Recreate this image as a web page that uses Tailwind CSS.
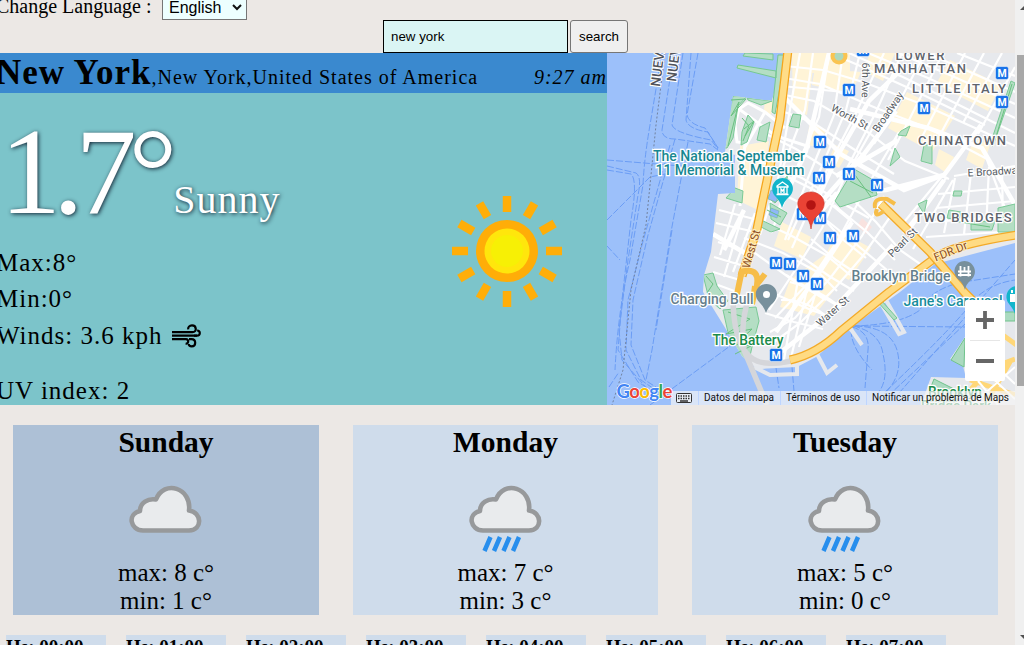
<!DOCTYPE html>
<html lang="en">
<head>
<meta charset="utf-8">
<title>Weather</title>
<script src="https://cdn.jsdelivr.net/npm/@tailwindcss/browser@4"></script>
</head>
<body class="h-[645px] w-[1024px] overflow-hidden bg-[#ece8e5] font-['Liberation_Serif',serif] text-black">
<div class="flex h-[645px] w-[1024px] overflow-hidden">
<main class="h-full w-[1015px] shrink-0 overflow-hidden">
  <div class="-mt-1 flex h-6 items-start">
    <label class="-ml-1 mt-[-2px] w-[166px] whitespace-nowrap text-xl leading-6">Change Language :</label>
    <div class="-mt-px flex h-[25px] w-[85px] items-center justify-between border border-[#767676] bg-[#edffff] pl-[6px] pr-1 font-['Liberation_Sans',sans-serif] text-base"><span>English</span>
      <svg class="h-[7px] w-[10px]" viewBox="0 0 10 7" fill="none" stroke="#111" stroke-width="2"><path d="M1 1l4 4 4-4"/></svg>
    </div>
  </div>
  <div class="flex h-[33px] gap-[2px] pl-[383px] font-['Liberation_Sans',sans-serif] text-[13.33px]">
    <div class="flex w-[185px] items-center border border-black bg-[#daf5f4] pl-[7px]">new york</div>
    <div class="flex w-[58px] items-center justify-center rounded-[3px] border border-[#767676] bg-[#efefef]">search</div>
  </div>

  <section class="flex h-[352px]">
    <div class="w-[607px] overflow-hidden bg-[#7cc4ca]">
      <header class="flex h-10 items-baseline justify-between whitespace-nowrap bg-[#3a89cf]">
        <div class="-ml-1 text-xl tracking-[1px]"><b class="text-[35px] leading-10 tracking-[1px]">New York</b>,New York,United States of America</div>
        <i class="pt-[2px] text-xl tracking-[1px]">9:27 am</i>
      </header>
      <div class="flex h-[312px]">
        <div class="w-[449px] whitespace-nowrap text-[25px] tracking-[1px]">
          <div class="h-[151px] text-white [text-shadow:1px_1px_4px_#123]"><span class="text-[122px] leading-[157px] tracking-[-8px]">1.7°</span><span class="ml-[4px] text-[40px] tracking-[1px]">Sunny</span></div>
          <p class="-ml-1 h-[37px] leading-[37px]">Max:8°</p>
          <p class="-ml-1 h-[36px] leading-[36px]">Min:0°</p>
          <p class="-ml-1 flex h-[37px] items-center leading-[37px]">Winds: 3.6 kph
            <svg class="ml-[10px] h-6 w-[29px]" viewBox="0 0 29 24" fill="none" stroke="#000" stroke-width="2.2"><path d="M0 8.2h20.5c4.7 0 4.2-6.8-.5-6.8-2.7 0-4.2 1.9-3.8 4M0 11.7h25c3.8 0 3.6-5.2.1-5.2M0 15.2h14c3.3 0 2.7 5-.4 4.3M17 15.2h2.5c5 0 4.8 7.2.2 7.2-2 0-3.1-1.2-2.9-2.5"/><path d="M22 11.7h3"/></svg>
          </p>
          <p class="-ml-1 mt-[19px] h-9 leading-9">UV index: 2</p>
        </div>
        <svg class="mt-[101px] h-[116px] w-[116px]" viewBox="449 195 116 116">
          <g fill="none" stroke="#ffae09" stroke-width="8.5"><path d="M507 197v16M507 292v16M452 252h16M546 252h16M479.500 204.400l8 13.800M526.500 285.800l8 13.800M534.500 204.400l-8 13.800M487.500 285.800l-8 13.800M459.400 224.500l13.800 8M540.800 271.500l13.800 8M554.600 224.500l-13.800 8M473.200 271.500l-13.800 8"/></g>
          <circle cx="507" cy="252" r="31" fill="#ffad08"/><circle cx="507" cy="252" r="22.500" fill="#ffe60c"/><circle cx="507" cy="252" r="16" fill="#f7f005"/>
        </svg>
      </div>
    </div>

    <svg class="h-[352px] w-[408px] shrink-0 font-['Roboto',sans-serif]" viewBox="607 53 408 352">
      <defs>
        <clipPath id="land"><path d="M784 53H1015V243L935 264 900 292 850 328 816 357 797 367 757 369 742 356 724 326 703 292 704 275 711 252 718 194 735 193 735 155 725 152 733 96 772 101Z"/></clipPath>
        <g id="metro"><rect x="-6.500" y="-6.500" width="13" height="13" rx="2" fill="#1a73e8" stroke="#fff" stroke-width=".5"/><text y="3.800" text-anchor="middle" font-size="10.500" font-weight="700" fill="#fff">M</text></g>
      </defs>
      <path fill="#9cc0fa" d="M607 53h408v352H607z"/>
      <g fill="none" stroke="#6b9df5" stroke-width="1" stroke-dasharray="7 2">
        <path d="M662 53L650 125Q644 160 643 185L630 260Q618 310 615 370M674 53L662 130Q662 139 675 139L710 144 718 150M683 53L672 125Q674 133 711 140L718 149M691 53L686 120Q688 129 708 132L718 148M698 53L687 115Q689 124 705 128L718 148"/>
        <path d="M607 160L718 169M607 166L636 173Q642 177 638 195L628 260 619 330 622 360 650 392M607 170L631 174Q638 180 631 220L622 300 618 350 638 382 660 396M675 139L648 235 633 300 631 345 645 380 668 395M670 145L642 245 628 300 626 350 641 380 670 400M688 142L671 232 652 350 646 380M672 230L656 330M607 220L650 177 665 174M607 246L620 260M609 387L619 372M650 405L730 346M776 368L779 388M792 367L794 391"/>
        <path d="M852 327Q870 332 868 350L865 388M853 326Q880 332 883 354Q889 380 878 393M855 326Q890 327 897 350Q904 375 884 394M851 330Q851 348 872 370M855 326L966 327M852 326Q900 325 920 310Q930 289 963 282L1015 274M885 392Q940 340 966 310Q982 285 1015 280M888 396L965 324M893 400L1015 260"/>
      </g>
      <path d="M665 53L656 125 646 225 631 290 623 370 612 405" fill="none" stroke="#7283a0" stroke-dasharray="2 2"/>
      <path d="M784 53H1015V243L935 264 900 292 850 328 816 357 797 367 757 369 742 356 724 326 703 292 704 275 711 252 718 194 735 193 735 155 725 152 733 96 772 101Z" fill="#e7e9ed"/>
      <path d="M797 360v14l-27 1-14-7ZM817 354l10 19 10-8M886 300l18 32-5 2-20-34ZM850 328l12 17" fill="none" stroke="#e5e8ed" stroke-width="4"/>
      <g clip-path="url(#land)">
        <g fill="#fff4d7"><path d="M792 53h23l-8 62-14-5ZM815 68l46 4-10 22-39-9ZM870 53h25l-12 28-20-10ZM740 146l29-5-9 70-23-11ZM766 86l10 0-5 29-7-5ZM810 122l16 8-8 18-12-4ZM835 145l14 6-10 17-11-6ZM907 92l48 24-23 36-44-24ZM950 60l51 25-13 26-52-27ZM939 149l15 8-8 16-11-8ZM790 280l34-25 30 10-40 51-34-9ZM782 222l29 15-9 22-28-13ZM838 230l33 18-22 32-29-14ZM811 53h39v20h-39ZM974 138l16 7-8 24-16-9Z"/></g>
        <path d="M862 218l10 9-6 7-9-8Z" fill="#f9e2df"/>
        <g fill="none" stroke="#fff" stroke-width="2.200">
          <path d="M800 53L789 115 778 180 760 235M813 53L805 110 783 167M829 53L819 117 804 150 771 233M843 53L834 115 806 183 785 240M860 53L846 110 822 166 788 240M884 53L855 115 831 161 792 248M902 53L876 112 846 170M925 53L895 110 874 144M943 53L908 122 888 160M965 53L922 137M984 53L940 135M1002 53L963 123M1015 67L978 134"/>
          <path d="M785 66L823 70 863 82 924 105 1015 146M784 78L820 84 876 108 928 128 989 160M780 94L814 101 869 133 905 161 949 179M773 108L812 122 855 150 894 174M781 86L844 92M849 53L905 78 969 110 1015 133M868 53L928 78 1015 118M898 53L952 76 1015 104M927 53L1015 92M957 53L1015 76M830 53L858 65 913 90 985 125"/>
          <path d="M768 135L796 149 834 173 874 197M755 160L802 178 842 203 869 218M778 172L814 190 852 222M774 190L817 211 841 238 866 258M753 218L790 235 826 255 850 275M744 238L783 253 819 273 837 291M752 251L794 281 826 300M719 210L758 220M716 223L755 232M718 242L745 251M714 257L744 266M713 272L740 280M718 285L737 292M744 210L724 277M735 204L720 255M755 213L733 272"/>
          <path d="M874 126L843 181 822 228 792 275 769 310M899 132L865 190 838 240 810 281 775 318M884 196L862 236 831 277 795 318 770 332M890 217L862 257 836 287 800 323 770 345M846 193L876 222 900 250 923 266M834 205L867 232 895 260M825 219L850 239 887 270M811 239L836 260 868 281M799 255L829 276 854 291M786 275L818 294 838 306M775 294L811 310 831 317M765 313L794 322 823 329M790 282Q821 290 841 308M781 300Q807 299 831 320M798 280L783 365M808 285L791 358M815 295L799 347"/>
          <path d="M954 176L1015 166M938 194L1015 187M936 208L1015 201M932 222L1015 216M926 237L1015 231M955 178L944 233M971 173L964 234M989 167L986 230M1002 165L1003 228M947 177L903 233M953 180L913 249M943 175L905 221M983 149L1015 235"/>
        </g>
        <g fill="none" stroke="#fff" stroke-width="4.500"><path d="M744 210L724 250M784 97L814 127 842 155 904 190 944 175M829 53L806 151 775 219M814 220L836 194 886 190 944 175 981 125M850 109L928 128 982 148 1015 205M907 232L944 180M815 209L864 154 896 111M810 215L838 155 869 101 901 70M852 222L815 279 776 332M893 245L826 317 777 355M836 176L898 140M713 234L748 255"/></g>
        <g fill="none" stroke="#fff" stroke-width="3"><path d="M740 206L745 143 737 142 735 125 739 109 748 103 765 112 785 128M739 109L776 136 810 147M765 112L745 147"/></g>
        <g fill="#b4dec4" stroke="#79c995"><path d="M733 96h14l-9 10-5 32-6 10h-4ZM747 98l25 3-11 4-13-5ZM748 115l6 7-7 20-6 3 1-13ZM760 127l10-5-4 20-9-2ZM793 114l8 1-2 13-10-2ZM775 191l13-16-6 21-7 7-8-6ZM770 203l17 10-7 12-9-6ZM735 188l8 3-1 12-16-5ZM759 219l21 10-9 3-12-6ZM842 189l12-20 19 11 4 15-37 12-5-6ZM901 131l9-5-4 10-8-1ZM895 148l5 9-10 9ZM924 145h8v19l-11-3ZM1011 81l4 2-22 63-3-1ZM949 210l12 2-2 8-12-2ZM918 204l9-4-3 14ZM971 222l24-1-3 9h-21ZM998 208l17-4v28h-17ZM954 191h8l-1 5h-8ZM703 275l10-2 4 13 11 15-8 8-11-10ZM723 310l33-3 3 14-7 26-4 18-15-10Z"/></g>
      </g>
      <g fill="#8fb8f8" stroke="#72b6a5" stroke-width=".6"><path d="M771 190l8 3-3 9-8-3ZM771 208l8 3-2 7-8-3Z"/></g>
      <g fill="#b4dec4" stroke="#76c892"><path d="M745 53l28 1v6l-30-4ZM738 65l38 6v7l-39-10ZM778 55h8l-11 59-3-2ZM881 300l16 18-3 2-17-19Z"/></g>
      <g fill="none" stroke="#6ac180"><path d="M731 100l15-1-15 17 8-14-11 44M742 118l7 8-6 15m1-12 10-8-9 15M706 276l7 8-6 9 9 5M728 312l22 7-24 15 26-5-16 15 15 2-16 8M850 181l23 12M855 175l16 22M781 217l-14-7M995 140l17-56M954 221l36 6"/></g>
      <g fill="none" stroke-linejoin="round">
        <path d="M788 50L780 119 765 190 757 229 742 276" stroke="#f5a51b" stroke-width="9"/><path d="M788 50L780 119 765 190 757 229 742 276" stroke="#ffdd88" stroke-width="6.500"/>
        <path d="M742 270L736 299M741 272Q762 266 756 290M755 286Q754 296 752 304M758 283l7-9" stroke="#f6bd49" stroke-width="6"/>
        <path d="M733 299Q734 361 766 363Q783 364 793 360M749 297Q740 324 744 350L767 405" stroke="#d5d6da" stroke-width="5.500"/>
        <path d="M790 360Q817 354 841 331L889 292 935 258Q952 245 1017 235" stroke="#f3aa28" stroke-width="9"/><path d="M790 360Q817 354 841 331L889 292 935 258Q952 245 1017 235" stroke="#ffdb83" stroke-width="6.500"/>
        <path d="M881 204L930 252 965 293 1018 345" stroke="#f3aa28" stroke-width="9"/><path d="M881 204L930 252 965 293 1018 345" stroke="#ffdb83" stroke-width="6.500"/>
        <path d="M875 208Q873 197 887 199L895 204M877 209Q873 219 884 211" stroke="#f6bd49" stroke-width="4"/>
        <circle cx="839" cy="56" r="6.500" stroke="#fac451" stroke-width="4" fill="#add8bd"/>
      </g>
      <path d="M1015 312L985 318 965 337 950 359 963 366 966 378 931 377 921 405H1015Z" fill="#e6e8ec"/>
      <path d="M1015 312h-14v9h14ZM965 338l-14 22 13 7ZM934 379l28 14-8 12h-30Z" fill="#abdac0" stroke="#70c48c"/>
      <path d="M1015 359L999 365Q982 375 967 394M1000 333l18 13M970 380l45 15M985 405l25-43" fill="none" stroke="#ffd778" stroke-width="5"/>
      <g fill="none" stroke="#fff" stroke-width="2"><path d="M978 381l20 24M988 374l27 25M997 367l18 17M975 402l40-35"/></g>

      <g font-size="13" font-weight="500" fill="#60646c" stroke="#fff" stroke-width="2.500" paint-order="stroke" text-anchor="middle">
        <text x="920" y="60" textLength="49">LOWER</text><text x="920" y="73" textLength="92">MANHATTAN</text><text x="959" y="93" textLength="94">LITTLE ITALY</text><text x="962" y="145" textLength="88">CHINATOWN</text><text x="963" y="222" textLength="97">TWO BRIDGES</text>
        <g font-size="13.800"><text x="729" y="161" fill="#168791" textLength="152" lengthAdjust="spacingAndGlyphs">The National September</text><text x="730" y="175" fill="#168791" textLength="149" lengthAdjust="spacingAndGlyphs">11 Memorial &amp; Museum</text>
        <text x="712" y="304" fill="#667f8c" textLength="83" lengthAdjust="spacingAndGlyphs">Charging Bull</text><text x="748" y="345" fill="#1b8b4a" textLength="71" lengthAdjust="spacingAndGlyphs">The Battery</text><text x="901" y="281" fill="#667f8c" textLength="99" lengthAdjust="spacingAndGlyphs">Brooklyn Bridge</text><text x="953" y="306" fill="#168d9c" textLength="99" lengthAdjust="spacingAndGlyphs">Jane's Carousel</text>
        <text x="955" y="397" fill="#1b8b4a" textLength="54" lengthAdjust="spacingAndGlyphs">Brooklyn</text><text x="956" y="411" fill="#1b8b4a" textLength="70" lengthAdjust="spacingAndGlyphs">Bridge Park</text></g>
      </g>
      <g font-size="10.500" fill="#555b62" stroke="#fff" stroke-width="2" paint-order="stroke" text-anchor="middle">
        <text transform="translate(862 80) rotate(91)">6th Ave</text><text transform="translate(848 120) rotate(29)">Worth St</text><text transform="translate(891 114) rotate(-56)">Broadway</text><text x="995" y="175" transform="rotate(-3 995 175)">E Broadway</text><text transform="translate(905 245) rotate(-45)">Pearl St</text><text transform="translate(835 314) rotate(-42)">Water St</text>
        <g fill="#8b4b20" stroke="#ffedbd"><text transform="translate(755 250) rotate(-74)" font-size="11.500">West St</text><text transform="translate(952 255) rotate(-22)" font-size="11.500">FDR Dr</text></g>
        <g fill="#50535b" font-size="13.500" font-weight="500" text-anchor="start"><text transform="translate(660 87) rotate(-83)">NUEVA</text><text transform="translate(676 82) rotate(-83)">NUEVA</text></g>
      </g>
      <use href="#metro" x="863" y="50"/><use href="#metro" x="849" y="90"/><use href="#metro" x="924" y="108"/><use href="#metro" x="1002" y="73"/><use href="#metro" x="1002" y="102"/><use href="#metro" x="820" y="142"/><use href="#metro" x="829" y="162"/><use href="#metro" x="819" y="178"/><use href="#metro" x="849" y="174"/><use href="#metro" x="877" y="185"/><use href="#metro" x="803" y="214"/><use href="#metro" x="820" y="218"/><use href="#metro" x="830" y="238"/><use href="#metro" x="853" y="236"/><use href="#metro" x="776" y="263"/><use href="#metro" x="790" y="264"/><use href="#metro" x="803" y="276"/><use href="#metro" x="817" y="284"/><use href="#metro" x="776" y="355"/>
      <path d="M782 208q-2-7-6-11c-8-8-2-19 6.500-19s15 11 6.500 19q-5 4-7 11Z" fill="#12b5cb"/><path d="M777 186l5.500-4 5.500 4v1h-11ZM778 187v7h9v-7M776.500 194.500h12M781 193v-4l1.500 2 1.500-2v4" fill="none" stroke="#fff" stroke-width="1.300"/>
      <path d="M766 313q-2-6-6-10c-9-9-2-19 6.500-19s15 10 6.500 19q-5 4-7 10Z" fill="#78909c"/><circle cx="766.500" cy="294.500" r="3.500" fill="#fff"/>
      <path d="M965 290q-2-7-6-10c-9-8-3-19 5.500-19s15 11 6.500 19q-5 4-6 10Z" fill="#78909c"/><path d="M960.500 266v10.500M968.500 266v10.500M958 271.500h13M958 275h13M964.500 267v4" stroke="#fff" stroke-width="1.800"/>
      <path d="M1018 286c-8 0-12 6-11.500 12s6 8 8.500 16Z" fill="#12b5cb"/><path d="M1010 294h5v8h-5Z" fill="#fff"/><path d="M1012 290v3" stroke="#fff" stroke-width="2"/>
      <path d="M811 229q-1-9-7-14c-13-12-3-23 7-23s20 11 7 23q-6 5-7 14Z" fill="#ea4335" stroke="#c93024" stroke-width=".6"/><circle cx="811" cy="205" r="4.800" fill="#b31412"/>
      <rect x="965" y="300" width="40" height="81" rx="2" fill="#fff"/><path d="M976 320h18M985 311v18M976 361h18" stroke="#666" stroke-width="3.800"/><path d="M970 340.500h30" stroke="#e6e6e6"/>
      <path d="M671 391h344v14H671z" fill="#f5f5f5" fill-opacity=".7"/><path d="M698.500 391v14M780.500 391v14M866.500 391v14" stroke="#bed5ff"/>
      <g font-size="10" fill="#111"><text x="704" y="401" textLength="70">Datos del mapa</text><text x="786" y="401" textLength="74">Términos de uso</text><text x="872" y="401" textLength="137">Notificar un problema de Maps</text></g>
      <rect x="676.500" y="393.500" width="15" height="9" rx="1" fill="#e9eef6" stroke="#333"/><path d="M678 396h12M678 398.500h12" stroke="#333" stroke-width="1.500" stroke-dasharray="1.500 1"/><path d="M680 401h8" stroke="#333" stroke-width="1.500"/>
      <text x="616.500" y="397.500" font-family="Lato" font-size="18.500" font-weight="700" textLength="56" stroke="#fff" stroke-width="1.500" paint-order="stroke"><tspan fill="#4285f4">G</tspan><tspan fill="#ea4335">o</tspan><tspan fill="#fbbc05">o</tspan><tspan fill="#4285f4">g</tspan><tspan fill="#34a853">l</tspan><tspan fill="#ea4335">e</tspan></text>
    </svg>
  </section>

  <svg class="hidden"><defs><g id="cloud"><path d="M14 47.500H60C74 47 73 29 60 27.500C63 5 35 -4 27 16.500C19 15 11 20 11 28C-2 31 1 47 14 47.500Z" fill="#e9ebed" stroke="#97999b" stroke-width="4.600" stroke-linejoin="round"/></g></defs></svg>
  <section class="flex h-[210px] pl-[13px] pt-5 text-center">
    <article class="mr-[34px] h-[190px] w-[306px] bg-[#adc0d6]"><h2 class="h-[52px] text-[29.5px] font-bold leading-[34px]">Sunday</h2><svg class="mx-auto h-[82px] w-[74px]" viewBox="0 -6 74 82"><use href="#cloud"/></svg><p class="text-[25px] leading-7">max: 8 c°</p><p class="text-[25px] leading-7">min: 1 c°</p></article>
    <article class="mr-[34px] h-[190px] w-[305px] bg-[#cfdceb]"><h2 class="h-[52px] text-[29.5px] font-bold leading-[34px]">Monday</h2><svg class="mx-auto h-[82px] w-[74px]" viewBox="0 -6 74 82"><use href="#cloud"/><path d="M21.500 54l-6 14M31 54l-6 14M40.500 54l-6 14M50 54l-6 14" stroke="#278eed" stroke-width="4.500"/></svg><p class="text-[25px] leading-7">max: 7 c°</p><p class="text-[25px] leading-7">min: 3 c°</p></article>
    <article class="h-[190px] w-[306px] bg-[#cfdceb]"><h2 class="h-[52px] text-[29.5px] font-bold leading-[34px]">Tuesday</h2><svg class="mx-auto h-[82px] w-[74px]" viewBox="0 -6 74 82"><use href="#cloud"/><path d="M21.500 54l-6 14M31 54l-6 14M40.500 54l-6 14M50 54l-6 14" stroke="#278eed" stroke-width="4.500"/></svg><p class="text-[25px] leading-7">max: 5 c°</p><p class="text-[25px] leading-7">min: 0 c°</p></article>
  </section>
  <section class="mt-5 flex gap-5 pl-[6px] text-[19px] font-bold leading-[24px] whitespace-nowrap">
    <div class="h-10 w-[100px] bg-[#cfdceb]">Hs: 00:00</div><div class="h-10 w-[100px] bg-[#cfdceb]">Hs: 01:00</div><div class="h-10 w-[100px] bg-[#cfdceb]">Hs: 02:00</div><div class="h-10 w-[100px] bg-[#cfdceb]">Hs: 03:00</div><div class="h-10 w-[100px] bg-[#cfdceb]">Hs: 04:00</div><div class="h-10 w-[100px] bg-[#cfdceb]">Hs: 05:00</div><div class="h-10 w-[100px] bg-[#cfdceb]">Hs: 06:00</div><div class="h-10 w-[100px] bg-[#cfdceb]">Hs: 07:00</div>
  </section>
</main>
<aside class="h-full w-[9px] overflow-hidden bg-[#f0f0f0]"><svg class="h-[645px] w-[9px]" viewBox="0 0 9 645"><path fill="#a8a8a8" d="M2 55h7v331H2z"/><path fill="#505050" d="M5 635h4v4ZM5 10l4-4v4Z"/></svg></aside>
</div>
</body>
</html>
